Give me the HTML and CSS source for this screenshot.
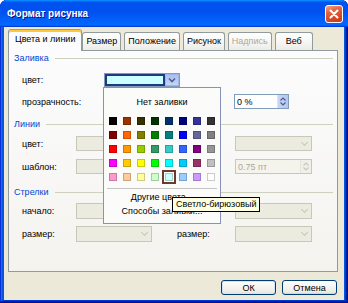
FILE: index.html
```html
<!DOCTYPE html>
<html lang="ru">
<head>
    <meta charset="UTF-8">
    <title>Формат рисунка</title>
    <link rel="stylesheet" href="styles.css">
</head>
<body>
<div class="window">
    <div class="titlebar">
        <span class="title">Формат рисунка</span>
        <button class="close" type="button">
            <svg width="10" height="10" viewBox="0 0 10 10"><path d="M1.5 1.5 L8.5 8.5 M8.5 1.5 L1.5 8.5" stroke="#fff" stroke-width="2" stroke-linecap="round"/></svg>
        </button>
    </div>

    <div class="client">
        <div class="tabs">
            <div class="tab active">Цвета и линии</div>
            <div class="tab">Размер</div>
            <div class="tab">Положение</div>
            <div class="tab">Рисунок</div>
            <div class="tab disabled">Надпись</div>
            <div class="tab">Веб</div>
        </div>

        <div class="panel">
            <div class="group fill">
                <div class="group-title">Заливка</div>
                <div class="row">
                    <label>цвет:</label>
                    <div class="color-combo">
                        <div class="color-value"></div>
                        <div class="drop-btn pressed">
                            <svg width="8" height="6" viewBox="0 0 8 6"><path d="M1 1.5 L4 4.5 L7 1.5" fill="none" stroke="#4d6185" stroke-width="1.6"/></svg>
                        </div>

                        <div class="palette">
                            <div class="no-fill">Нет заливки</div>
                            <div class="swatches" id="swatches"></div>
                            <div class="separator"></div>
                            <div class="menu-item">Другие цвета...</div>
                            <div class="menu-item">Способы заливки...</div>
                        </div>
                    </div>
                </div>
                <div class="row">
                    <label>прозрачность:</label>
                    <div></div>
                    <div class="spin">
                        <span class="spin-text">0 %</span>
                        <div class="spin-btn">
                            <svg width="6" height="4" viewBox="0 0 6 4"><path d="M0.5 3.5 L3 1 L5.5 3.5" fill="none" stroke="#4d6185" stroke-width="1.2"/></svg>
                            <svg width="6" height="4" viewBox="0 0 6 4"><path d="M0.5 0.5 L3 3 L5.5 0.5" fill="none" stroke="#4d6185" stroke-width="1.2"/></svg>
                        </div>
                    </div>
                </div>
            </div>

            <div class="group lines">
                <div class="group-title">Линии</div>
                <div class="row two-col">
                    <label>цвет:</label>
                    <div class="combo disabled"><span></span><i class="arrow"></i></div>
                    <span></span>
                    <span></span>
                    <div class="combo disabled"><span></span><i class="arrow"></i></div>
                </div>
                <div class="row two-col">
                    <label>шаблон:</label>
                    <div class="combo disabled"><span></span><i class="arrow"></i></div>
                    <span></span>
                    <span></span>
                    <div class="spin disabled">
                        <span class="spin-text">0.75 пт</span>
                        <div class="spin-btn">
                            <svg width="6" height="4" viewBox="0 0 6 4"><path d="M0.5 3.5 L3 1 L5.5 3.5" fill="none" stroke="#c9c7ba" stroke-width="1.2"/></svg>
                            <svg width="6" height="4" viewBox="0 0 6 4"><path d="M0.5 0.5 L3 3 L5.5 0.5" fill="none" stroke="#c9c7ba" stroke-width="1.2"/></svg>
                        </div>
                    </div>
                </div>
            </div>

            <div class="group arrows">
                <div class="group-title">Стрелки</div>
                <div class="row two-col">
                    <label>начало:</label>
                    <div class="combo disabled"><span></span><i class="arrow"></i></div>
                    <span></span>
                    <span></span>
                    <div class="combo disabled"><span></span><i class="arrow"></i></div>
                </div>
                <div class="row two-col">
                    <label>размер:</label>
                    <div class="combo disabled"><span></span><i class="arrow"></i></div>
                    <span></span>
                    <label>размер:</label>
                    <div class="combo disabled"><span></span><i class="arrow"></i></div>
                </div>
            </div>
        </div>

        <div class="button-group">
            <button class="btn default" type="button">ОК</button>
            <button class="btn" type="button">Отмена</button>
        </div>
    </div>

    <div class="tooltip">Светло-бирюзовый</div>
</div>

<script>
    const colors = [
        '#000000', '#993300', '#333300', '#003300', '#003366', '#000080', '#333399', '#333333',
        '#800000', '#ff6600', '#808000', '#008000', '#008080', '#0000ff', '#666699', '#808080',
        '#ff0000', '#ff9900', '#99cc00', '#339966', '#33cccc', '#3366ff', '#800080', '#969696',
        '#ff00ff', '#ffcc00', '#ffff00', '#00ff00', '#00ffff', '#00ccff', '#993366', '#c0c0c0',
        '#ff99cc', '#ffcc99', '#ffff99', '#ccffcc', '#ccffff', '#99ccff', '#cc99ff', '#ffffff'
    ];

    const swatches = document.getElementById('swatches');

    colors.forEach((color, idx) => {
        const swatch = document.createElement('div');
        swatch.className = 'swatch';
        if (idx === 36) swatch.classList.add('selected');
        swatch.style.background = color;
        swatches.appendChild(swatch);
    });
</script>
</body>
</html>
```

FILE: styles.css
```css
* {
    box-sizing: border-box;
}
body {
    margin: 0;
    font-family: "Liberation Sans", Arial, sans-serif;
    font-size: 9px;
    color: #000;
    background: #fff;
}
.window {
    position: relative;
    width: 348px;
    height: 303px;
    display: flex;
    flex-direction: column;
    background: #0855dd;
    border-radius: 7px 7px 0 0;
    overflow: hidden;
    box-shadow: inset -1px -1px #00138c, inset 1px 1px #0831d9, inset -2px -2px #001ea0,
                inset 2px 2px #166aee, inset -3px -3px #003bda, inset 3px 3px #0855dd;
}
.titlebar {
    height: 27px;
    flex: none;
    display: flex;
    align-items: center;
    justify-content: space-between;
    padding: 0 5px 0 7px;
    background: linear-gradient(180deg, #0997ff, #0053ee 8%, #0050ee 40%, #06f 88%, #06f 93%, #005bff 95%, #003dd7 96%, #003dd7);
}
.title {
    color: #fff;
    font-weight: bold;
    font-size: 10px;
    text-shadow: 1px 1px #0f1089;
}
.close {
    width: 18px;
    height: 18px;
    padding: 0;
    border: 1px solid #fff;
    border-radius: 3px;
    background: linear-gradient(160deg, #f3a58a, #e4613c 35%, #d2421d 80%, #c83a16);
    display: flex;
    align-items: center;
    justify-content: center;
}
.client {
    flex: 1;
    margin: 0 4px 3px;
    background: #ece9d8;
    padding: 2px 6px 5px 4px;
    display: flex;
    flex-direction: column;
}

/* tabs */
.tabs {
    height: 21px;
    display: flex;
    align-items: flex-end;
}
.tab {
    min-width: 38px;
    height: 18px;
    line-height: 17px;
    padding: 0 3px;
    margin-right: 3px;
    border: 1px solid #919b9c;
    border-bottom: none;
    border-radius: 3px 3px 0 0;
    background: linear-gradient(#fff, #f7f7f5 50%, #ecebe6);
    text-align: center;
}
.tab.active {
    position: relative;
    z-index: 1;
    height: 22px;
    margin-bottom: -1px;
    margin-right: 0;
    padding: 0 6px;
    line-height: 19px;
    border-top: 1px solid #e68b2c;
    box-shadow: inset 0 2px 0 #ffc83c;
    background: #fcfcfe;
}
.tab.disabled {
    color: #aca899;
}

/* panel */
.panel {
    height: 222px;
    flex: none;
    border: 1px solid #919b9c;
    background: linear-gradient(#fcfcfe, #f4f3ee);
    padding: 0 4px 0 5px;
}
.group {
    display: flex;
    flex-direction: column;
    gap: 7px;
}
.group.lines {
    margin-top: 8px;
    gap: 8px;
}
.group.arrows {
    margin-top: 11px;
    gap: 7px;
}
.lines .group-title, .arrows .group-title {
    margin-bottom: -3px;
}
.group-title {
    height: 14px;
    display: flex;
    align-items: center;
    color: #0046d5;
}
.group-title::after {
    content: "";
    flex: 1;
    height: 1px;
    margin-left: 6px;
    background: #d0d0bf;
}
.row {
    height: 15px;
    padding-left: 8px;
    display: grid;
    grid-template-columns: 82px 130px 55px;
    align-items: center;
}
.fill .row:first-of-type {
    height: 14px;
}
.arrows .row {
    height: 16px;
}
.row.two-col {
    grid-template-columns: 54px 76px 25px 58px 77px;
}
.row label {
    white-space: nowrap;
}

/* controls */
.color-combo {
    position: relative;
    width: 76px;
    height: 14px;
    display: flex;
    border: 1px solid #7f9db9;
    background: #fff;
}
.color-value {
    flex: 1;
    background: #ccffff;
    border: 2px solid #1d3a82;
}
.drop-btn {
    width: 14px;
    display: flex;
    align-items: center;
    justify-content: center;
    border: 1px solid #b9cdf6;
    background: linear-gradient(#d6e3fd, #b4c8f5);
}
.drop-btn.pressed {
    background: linear-gradient(#a9bff3, #c3d4f9);
    border-color: #9eb5ea;
}
.combo {
    height: 100%;
    display: flex;
    border: 1px solid #c9c7ba;
    background: #ecebe0;
}
.combo span {
    flex: 1;
}
.combo .arrow {
    width: 14px;
    display: flex;
    align-items: center;
    justify-content: center;
}
.combo .arrow::before {
    content: "";
    width: 4px;
    height: 4px;
    margin-top: -3px;
    border-right: 1.5px solid #c9c7ba;
    border-bottom: 1.5px solid #c9c7ba;
    transform: rotate(45deg);
}
.spin {
    height: 100%;
    display: flex;
    align-items: center;
    border: 1px solid #7f9db9;
    background: #fff;
    padding-left: 2px;
}
.spin-text {
    flex: 1;
}
.spin-btn {
    width: 11px;
    height: 100%;
    display: flex;
    flex-direction: column;
    align-items: center;
    justify-content: center;
    gap: 1px;
    background: linear-gradient(90deg, #c6d6fb, #b2c6f3);
    border-left: 1px solid #d9e3fb;
}
.spin.disabled {
    border-color: #c9c7ba;
    background: #f5f4ec;
    color: #aca899;
}
.spin.disabled .spin-btn {
    background: #f1f0e8;
    border-left-color: #e6e4da;
}

/* colour palette */
.palette {
    position: absolute;
    z-index: 5;
    top: 13px;
    left: -2px;
    width: 118px;
    height: 137px;
    border: 1px solid #8892b8;
    background: #fbfbf9;
    padding: 4px 5px 0;
}
.no-fill {
    height: 20px;
    line-height: 20px;
    text-align: center;
}
.swatches {
    margin-top: 5px;
    display: grid;
    grid-template-columns: repeat(8, 8px);
    grid-auto-rows: 8px;
    gap: 6px;
}
.swatch {
    box-shadow: inset 0 0 0 1px rgba(0, 0, 0, 0.2);
}
.swatch.selected {
    box-shadow: inset 0 0 0 1px rgba(0, 0, 0, 0.2), 0 0 0 1px #fff, 0 0 0 3px #6e3a2e;
}
.separator {
    height: 1px;
    margin: 7px -2px 1px;
    background: #c5c5c5;
}
.menu-item {
    height: 14px;
    line-height: 14px;
    text-align: center;
}

/* buttons */
.button-group {
    margin-top: 8px;
    display: flex;
    justify-content: flex-end;
    gap: 6px;
    padding-right: 1px;
}
.btn {
    width: 55px;
    height: 15px;
    padding: 0;
    font: inherit;
    border: 1px solid #003c74;
    border-radius: 3px;
    background: linear-gradient(180deg, #fff, #ecebe6 86%, #d6d0c5);
}
.btn.default {
    box-shadow: inset 0 0 0 1px #cee7ff;
}

.tooltip {
    position: absolute;
    z-index: 10;
    left: 172px;
    top: 197px;
    height: 15px;
    padding: 0 3px;
    line-height: 13px;
    border: 1px solid #000;
    background: #ffffe1;
    white-space: nowrap;
}
```
